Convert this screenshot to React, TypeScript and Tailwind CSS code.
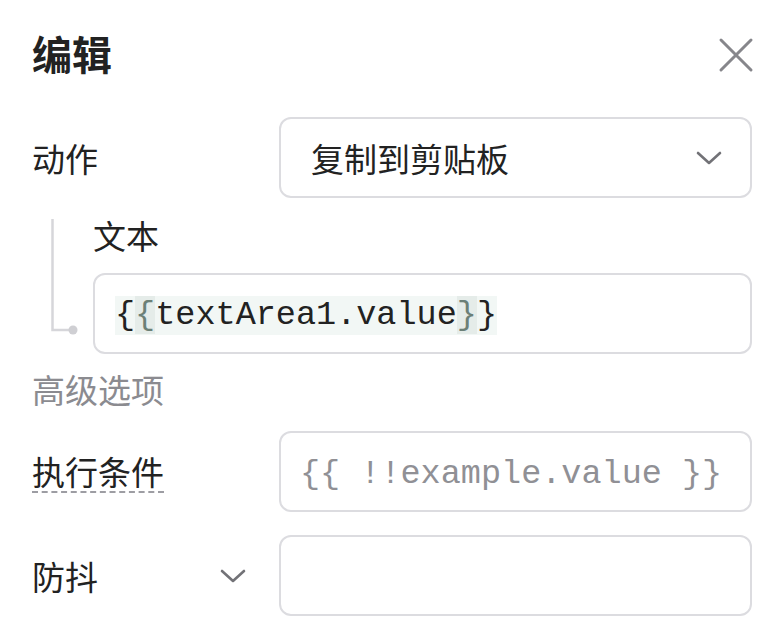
import React from 'react';

// Editor panel: action row, nested text field, advanced options

const cjk = { fontFamily: '"Noto Sans CJK SC", "Noto Sans", sans-serif' };
const mono = { fontFamily: '"Liberation Mono", "Courier New", monospace' };

const Chevron: React.FC = () => (
  <svg width="26" height="14" viewBox="0 0 26 14" fill="none">
    <path d="M2 2 L13 12 L24 2" stroke="#727277" strokeWidth="2.6" strokeLinecap="round" strokeLinejoin="round" />
  </svg>
);

const Field: React.FC<{ children?: React.ReactNode; className?: string }> = ({ children, className }) => (
  <div
    className={`flex-1 h-[81px] flex items-center border-2 border-[#dcdce0] rounded-[12px] bg-white ${className || ''}`}
  >
    {children}
  </div>
);

export default function App() {
  return (
    <div className="w-[780px] h-[640px] bg-white pl-[32px] pr-[28px] pt-[29px] text-[#222222]" style={cjk}>
      {/* Header */}
      <div className="flex items-center justify-between h-[48px]">
        <h1 className="text-[40px] leading-[48px] font-bold">编辑</h1>
        <svg width="36" height="36" viewBox="0 0 36 36" fill="none" className="mr-[-2px] mt-[4px]">
          <path d="M3 3 L33 33 M33 3 L3 33" stroke="#86868b" strokeWidth="3" strokeLinecap="round" />
        </svg>
      </div>

      {/* Action */}
      <div className="flex items-center mt-[40px]">
        <div className="w-[247px] text-[33px] leading-[40px]">动作</div>
        <Field className="justify-between pl-[30px] pr-[28px]">
          <span className="text-[33px] leading-[40px]">复制到剪贴板</span>
          <Chevron />
        </Field>
      </div>

      {/* Nested text param */}
      <div className="flex mt-[17px]">
        <div className="w-[61px] shrink-0">
          <svg width="61" height="138" viewBox="0 0 61 138" fill="none">
            <path d="M20.5 4 V115 H38" stroke="#d6d6da" strokeWidth="2.5" />
            <circle cx="41" cy="115" r="4.5" fill="#cfcfd3" />
          </svg>
        </div>
        <div className="flex-1 flex flex-col">
          <div className="text-[33px] leading-[40px]">文本</div>
          <div className="mt-[18px] flex">
            <Field className="pl-[20px] pt-[4px]">
              <span className="bg-[#f2f7f5] text-[33.5px] leading-[39px]" style={mono}>
                {'{'}
                <span className="bg-[#e5ece9] text-[#6c8077]">{'{'}</span>
                textArea1.value
                <span className="bg-[#e5ece9] text-[#6c8077]">{'}'}</span>
                {'}'}
              </span>
            </Field>
          </div>
        </div>
      </div>

      {/* Advanced */}
      <div className="mt-[15px] text-[33px] leading-[40px] text-[#8b8b90]">高级选项</div>

      <div className="flex items-center mt-[22px]">
        <div className="w-[247px]">
          <span className="inline-block text-[33px] leading-[40px] border-b-2 border-dashed border-[#9d9da3]">执行条件</span>
        </div>
        <Field className="pl-[19px] pt-[4px]">
          <span className="text-[33.5px] leading-[40px] text-[#909095]" style={mono}>
            {'{{ !!example.value }}'}
          </span>
        </Field>
      </div>

      <div className="flex items-center mt-[23px]">
        <div className="w-[247px] flex items-center justify-between pr-[33px]">
          <span className="text-[33px] leading-[40px]">防抖</span>
          <Chevron />
        </div>
        <Field />
      </div>
    </div>
  );
}
